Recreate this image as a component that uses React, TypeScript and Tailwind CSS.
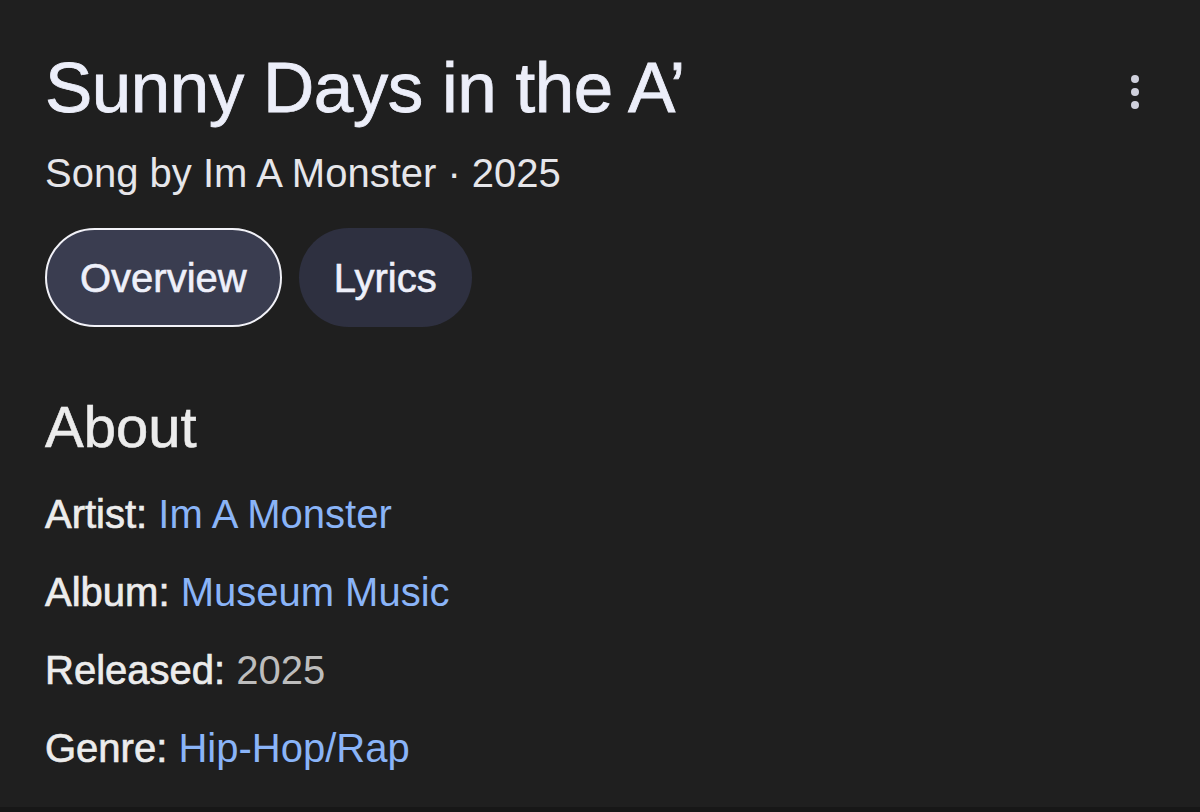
export default function App() {
  const rows: { label: string; value: string; link: boolean }[] = [
    { label: 'Artist:', value: 'Im A Monster', link: true },
    { label: 'Album:', value: 'Museum Music', link: true },
    { label: 'Released:', value: '2025', link: false },
    { label: 'Genre:', value: 'Hip-Hop/Rap', link: true },
  ];

  return (
    <div
      className="w-[1200px] h-[812px] bg-[#1f1f1f] overflow-hidden flex flex-col"
      style={{ fontFamily: '"Liberation Sans", Arial, sans-serif' }}
    >
      <div className="flex-1 pl-[45px] pr-[61px] pt-[48px]">
        {/* Header */}
        <div className="flex items-start justify-between">
          <h1 className="text-[71px] leading-[80px] text-[#eceef9] tracking-[-0.5px] [-webkit-text-stroke:0.8px_#eceef9]">
            Sunny Days in the A’
          </h1>
          <button className="mt-[27px] flex flex-col items-center gap-[5px] w-[8px]">
            <span className="w-[8px] h-[8px] rounded-full bg-[#cfd0dc]" />
            <span className="w-[8px] h-[8px] rounded-full bg-[#cfd0dc]" />
            <span className="w-[8px] h-[8px] rounded-full bg-[#cfd0dc]" />
          </button>
        </div>
        <div className="mt-[21px] text-[40px] leading-[48px] text-[#e6e6ea]">
          Song by Im A Monster · 2025
        </div>

        {/* Tabs */}
        <div className="mt-[31px] flex gap-[17px]">
          <button className="h-[99px] px-[33px] rounded-full bg-[#3a3d50] border-2 border-[#f2f2f8] text-[40px] text-[#eef0fa] [-webkit-text-stroke:0.6px_#eef0fa]">
            Overview
          </button>
          <button className="h-[99px] px-[35px] rounded-full bg-[#2e3040] text-[40px] text-[#eef0fa] [-webkit-text-stroke:0.6px_#eef0fa]">
            Lyrics
          </button>
        </div>

        {/* About */}
        <h2 className="mt-[67px] text-[58px] leading-[66px] text-[#ececec] [-webkit-text-stroke:0.6px_#ececec]">
          About
        </h2>
        <div className="mt-[30px] flex flex-col gap-[30px]">
          {rows.map((r) => (
            <div key={r.label} className="text-[40px] leading-[48px]">
              <span className="text-[#ececec] [-webkit-text-stroke:0.7px_#ececec]">{r.label}</span>{' '}
              <span className={r.link ? 'text-[#8ab4f8]' : 'text-[#bdbdbd]'}>{r.value}</span>
            </div>
          ))}
        </div>
      </div>
      <div className="h-[5px] bg-[#171717]" />
    </div>
  );
}
